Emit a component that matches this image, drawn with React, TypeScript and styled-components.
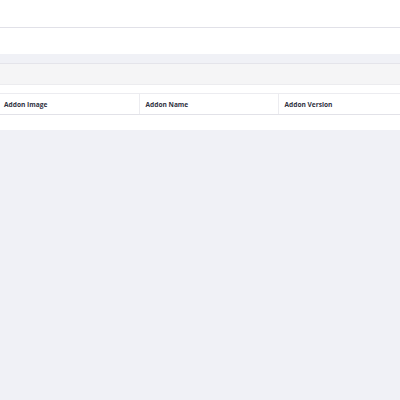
import styled, { createGlobalStyle } from 'styled-components';

const GlobalStyle = createGlobalStyle`
  html, body {
    margin: 0;
    padding: 0;
    background-color: #f0f1f6;
    font-family: "Open Sans", "Liberation Sans", sans-serif;
  }
`;

const TopBar = styled.div`
  height: 27px;
  background-color: #ffffff;
  border-bottom: 1px solid #e1e1e8;
  box-shadow: 0 1px 2px rgba(0, 0, 0, 0.04);
`;

const SubBar = styled.div`
  height: 26px;
  background-color: #ffffff;
`;

const Content = styled.div`
  padding-top: 9px;
`;

const Card = styled.div`
  background-color: #ffffff;
  border-top: 1px solid #e4e4ea;
  overflow: hidden;
`;

const CardHeader = styled.div`
  height: 20px;
  background-color: #f5f5f6;
  border-bottom: 1px solid #ececef;
`;

const CardBody = styled.div`
  padding: 8px 0 15px;
`;

const Table = styled.table`
  border-collapse: collapse;
  table-layout: fixed;
  width: 417px;
`;

const HeadCell = styled.th`
  box-sizing: border-box;
  width: 139px;
  height: 21px;
  padding: 0 6px;
  text-align: left;
  font-size: 6.6px;
  font-weight: 700;
  color: #30323f;
  border-top: 1px solid #ececf0;
  border-bottom: 1px solid #e2e2e8;
  border-left: 1px solid #ececf0;
  white-space: nowrap;

  &:first-child {
    border-left: none;
    padding-left: 4px;
  }
`;

const columns = ['Addon Image', 'Addon Name', 'Addon Version'];

const App = () => {
  return (
    <>
      <GlobalStyle />
      <TopBar />
      <SubBar />
      <Content>
        <Card>
          <CardHeader />
          <CardBody>
            <Table>
              <thead>
                <tr>
                  {columns.map((c) => (
                    <HeadCell key={c}>{c}</HeadCell>
                  ))}
                </tr>
              </thead>
            </Table>
          </CardBody>
        </Card>
      </Content>
    </>
  );
};

export default App;
